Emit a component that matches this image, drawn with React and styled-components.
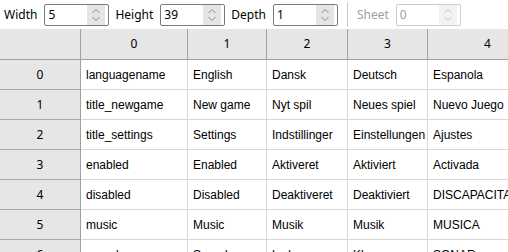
import React from "react";
import styled, { createGlobalStyle } from "styled-components";

const columns = ["0", "1", "2", "3", "4"];
const colWidths = [81, 107, 79, 81, 80, 120];

const rows = [
  ["languagename", "English", "Dansk", "Deutsch", "Espanola"],
  ["title_newgame", "New game", "Nyt spil", "Neues spiel", "Nuevo Juego"],
  ["title_settings", "Settings", "Indstillinger", "Einstellungen", "Ajustes"],
  ["enabled", "Enabled", "Aktiveret", "Aktiviert", "Activada"],
  ["disabled", "Disabled", "Deaktiveret", "Deaktiviert", "DISCAPACITADO"],
  ["music", "Music", "Musik", "Musik", "MUSICA"],
  ["sound", "Sound", "Lyd", "Klang", "SONAR"],
];

function SpinArrows({ disabled }) {
  return (
    <svg width="18" height="20" viewBox="0 0 18 20">
      <g fill="none" stroke={disabled ? "#c8c8c8" : "#8a8a8a"} strokeWidth="1">
        <path d="M5.5 8 L9 4.5 L12.5 8" />
        <path d="M5.5 12 L9 15.5 L12.5 12" />
      </g>
    </svg>
  );
}

function SpinBox({ value, disabled }) {
  return (
    <Spin disabled={disabled}>
      <SpinValue disabled={disabled}>{value}</SpinValue>
      <SpinButton disabled={disabled}>
        <SpinArrows disabled={disabled} />
      </SpinButton>
    </Spin>
  );
}

export default function App() {
  return (
    <>
      <Global />
      <Page>
        <Toolbar>
          <Field>
            <Label>Width</Label>
            <SpinBox value="5" />
          </Field>
          <Field>
            <Label>Height</Label>
            <SpinBox value="39" />
          </Field>
          <Field>
            <Label>Depth</Label>
            <SpinBox value="1" />
          </Field>
          <Separator />
          <Field>
            <Label disabled>Sheet</Label>
            <SpinBox value="0" disabled />
          </Field>
        </Toolbar>
        <Table style={{ gridTemplateColumns: colWidths.map((w) => w + "px").join(" ") }}>
          <Corner />
          {columns.map((c) => (
            <ColHead key={c}>{c}</ColHead>
          ))}
          {rows.map((r, i) => (
            <React.Fragment key={i}>
              <RowHead>{i}</RowHead>
              {r.map((v, j) => (
                <Cell key={j}>{v}</Cell>
              ))}
            </React.Fragment>
          ))}
        </Table>
      </Page>
    </>
  );
}

const Global = createGlobalStyle`
  html, body { margin: 0; padding: 0; background: #fff; }
  body { width: 508px; height: 252px; overflow: hidden; }
`;

const Page = styled.div`
  width: 508px;
  height: 252px;
  overflow: hidden;
  display: flex;
  flex-direction: column;
  font-family: "Noto Sans", "Open Sans", sans-serif;
  font-size: 12px;
  color: #000;
`;

const Toolbar = styled.div`
  height: 29px;
  flex: none;
  display: flex;
  align-items: center;
  padding-left: 4px;
  gap: 6px;
`;

const Field = styled.div`
  display: flex;
  align-items: center;
  gap: 7px;
`;

const Label = styled.span`
  color: ${(p) => (p.disabled ? "#a0a0a0" : "#000")};
  line-height: 16px;
`;

const Separator = styled.div`
  width: 1px;
  height: 25px;
  background: #c8c8c8;
  margin: 0 3px;
`;

const Spin = styled.div`
  box-sizing: border-box;
  width: 65px;
  height: 22px;
  border: 1px solid ${(p) => (p.disabled ? "#cccccc" : "#7a7a7a")};
  border-radius: 2px;
  background: #fff;
  display: flex;
  align-items: stretch;
`;

const SpinValue = styled.span`
  flex: 1;
  padding-left: 3px;
  line-height: 20px;
  color: ${(p) => (p.disabled ? "#a0a0a0" : "#000")};
`;

const SpinButton = styled.span`
  width: 18px;
  margin: 0 3px 0 0;
  background: ${(p) => (p.disabled ? "#f3f3f3" : "#e5e5e5")};
  display: flex;
  align-items: center;
  justify-content: center;
`;

const Table = styled.div`
  display: grid;
  grid-auto-rows: 30px;
  grid-template-rows: 31px;
  overflow: hidden;
`;

const HeadBase = styled.div`
  box-sizing: border-box;
  background: #e6e6e6;
  border-right: 1px solid #a0a0a0;
  border-bottom: 1px solid #a0a0a0;
  display: flex;
  align-items: center;
  justify-content: center;
  white-space: nowrap;
  overflow: hidden;
`;

const Corner = styled(HeadBase)``;

const ColHead = styled(HeadBase)`
  padding-bottom: 1px;
`;

const RowHead = styled(HeadBase)`
  border-bottom-color: #a8a8a8;
`;

const Cell = styled.div`
  box-sizing: border-box;
  border-right: 1px solid #d8d8d8;
  border-bottom: 1px solid #d8d8d8;
  padding-left: 5px;
  display: flex;
  align-items: center;
  font-family: "Liberation Sans", Arial, sans-serif;
  font-size: 12px;
  white-space: nowrap;
  overflow: hidden;
`;
